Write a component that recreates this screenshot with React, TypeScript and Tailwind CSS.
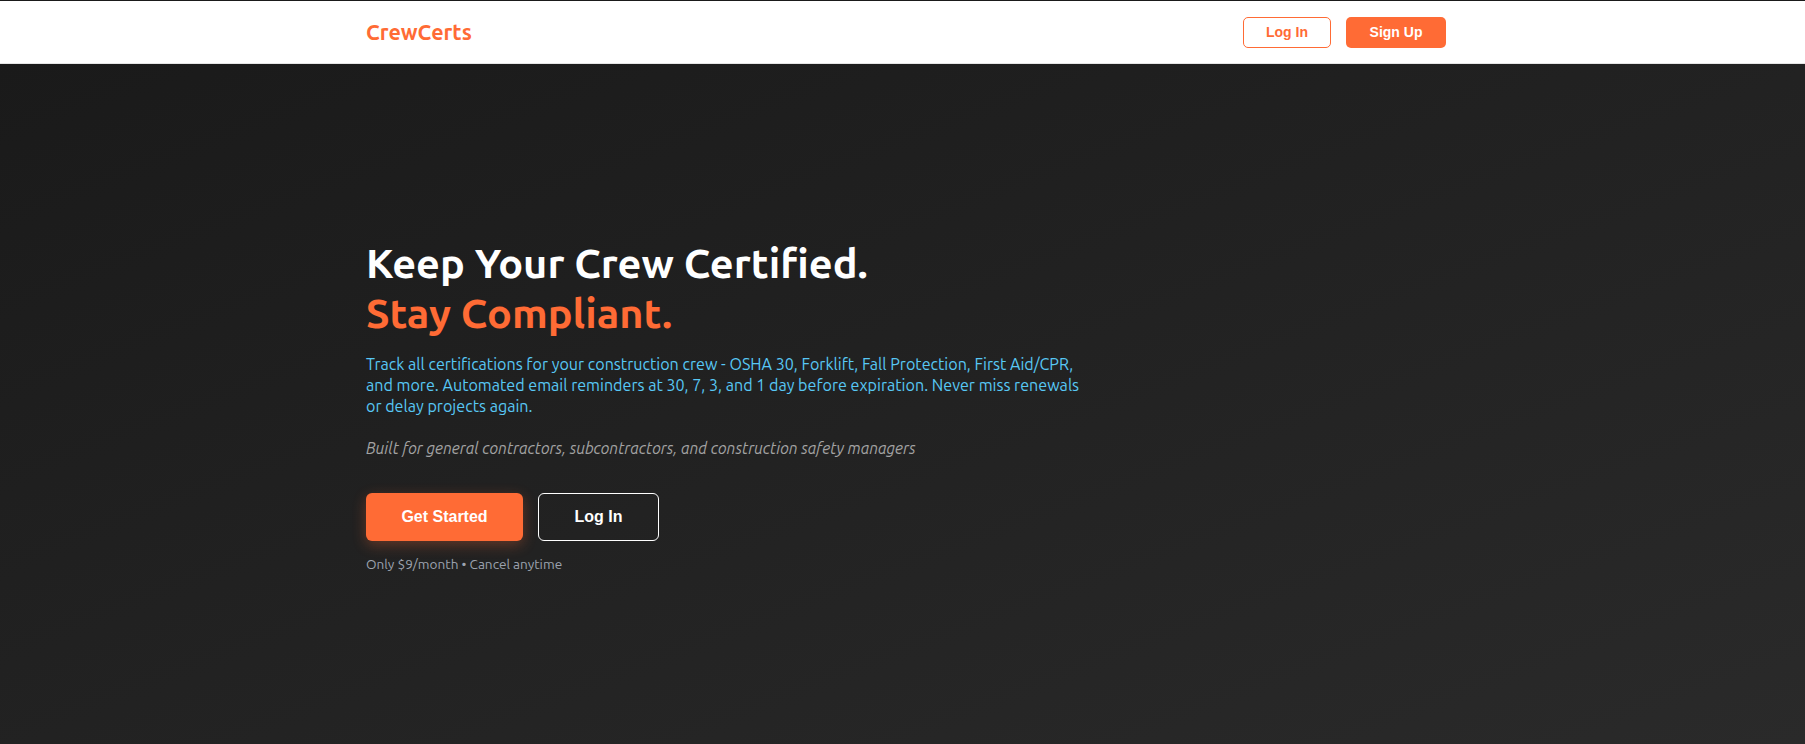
import React from "react";

function Header() {
    return (
        <header className="bg-white border-t border-[#1a1a1a] border-b border-b-[#e5e5e5] h-[64px] flex items-center">
            <div className="mx-auto w-[1087px] pl-[7px] flex items-center justify-between">
                <span className="text-[21.5px] font-bold text-[#ff6b35] font-['Ubuntu','Lato',sans-serif]">CrewCerts</span>
                <div className="flex items-center gap-[15px] font-['Liberation_Sans',Arial,sans-serif]">
                    <button className="w-[88px] h-[31px] border border-[#ff6b35] text-[#ff6b35] rounded-[5px] text-[14px] font-bold bg-white">Log In</button>
                    <button className="w-[100px] h-[31px] bg-[#ff6b35] text-white rounded-[5px] text-[14px] font-bold">Sign Up</button>
                </div>
            </div>
        </header>
    );
}

function Hero() {
    return (
        <section className="flex-1 flex items-center bg-gradient-to-br from-[#1a1a1a] to-[#2a2a2a]">
            <div className="mx-auto w-[1087px] pl-[7px] pt-[5px] font-['Ubuntu','Lato',sans-serif]">
                <h1 className="text-[41.5px] font-bold leading-[50px] text-white">
                    Keep Your Crew Certified.
                    <br />
                    <span className="text-[#ff6b35]">Stay Compliant.</span>
                </h1>
                <p className="mt-[16px] max-w-[720px] text-[16.1px] leading-[21px] text-[#58c8f5]">
                    Track all certifications for your construction crew - OSHA 30, Forklift, Fall Protection, First Aid/CPR, and more. Automated email reminders at 30, 7, 3, and 1 day before expiration. Never miss renewals or delay projects again.
                </p>
                <p className="mt-[20px] text-[15.8px] italic text-[#a3a3a3]">
                    Built for general contractors, subcontractors, and construction safety managers
                </p>
                <div className="mt-[32px] flex gap-[15px] font-['Liberation_Sans',Arial,sans-serif]">
                    <button className="w-[157px] h-[48px] rounded-[6px] bg-[#ff6b35] text-white text-[16px] font-bold shadow-[0_4px_14px_rgba(255,107,53,0.3)]">Get Started</button>
                    <button className="w-[121px] h-[48px] rounded-[6px] border border-white text-white text-[16px] font-bold">Log In</button>
                </div>
                <p className="mt-[13px] text-[13.6px] text-[#9ca3af]">Only $9/month • Cancel anytime</p>
            </div>
        </section>
    );
}

export default function App() {
    return (
        <div className="h-screen flex flex-col">
            <Header />
            <Hero />
        </div>
    );
}
